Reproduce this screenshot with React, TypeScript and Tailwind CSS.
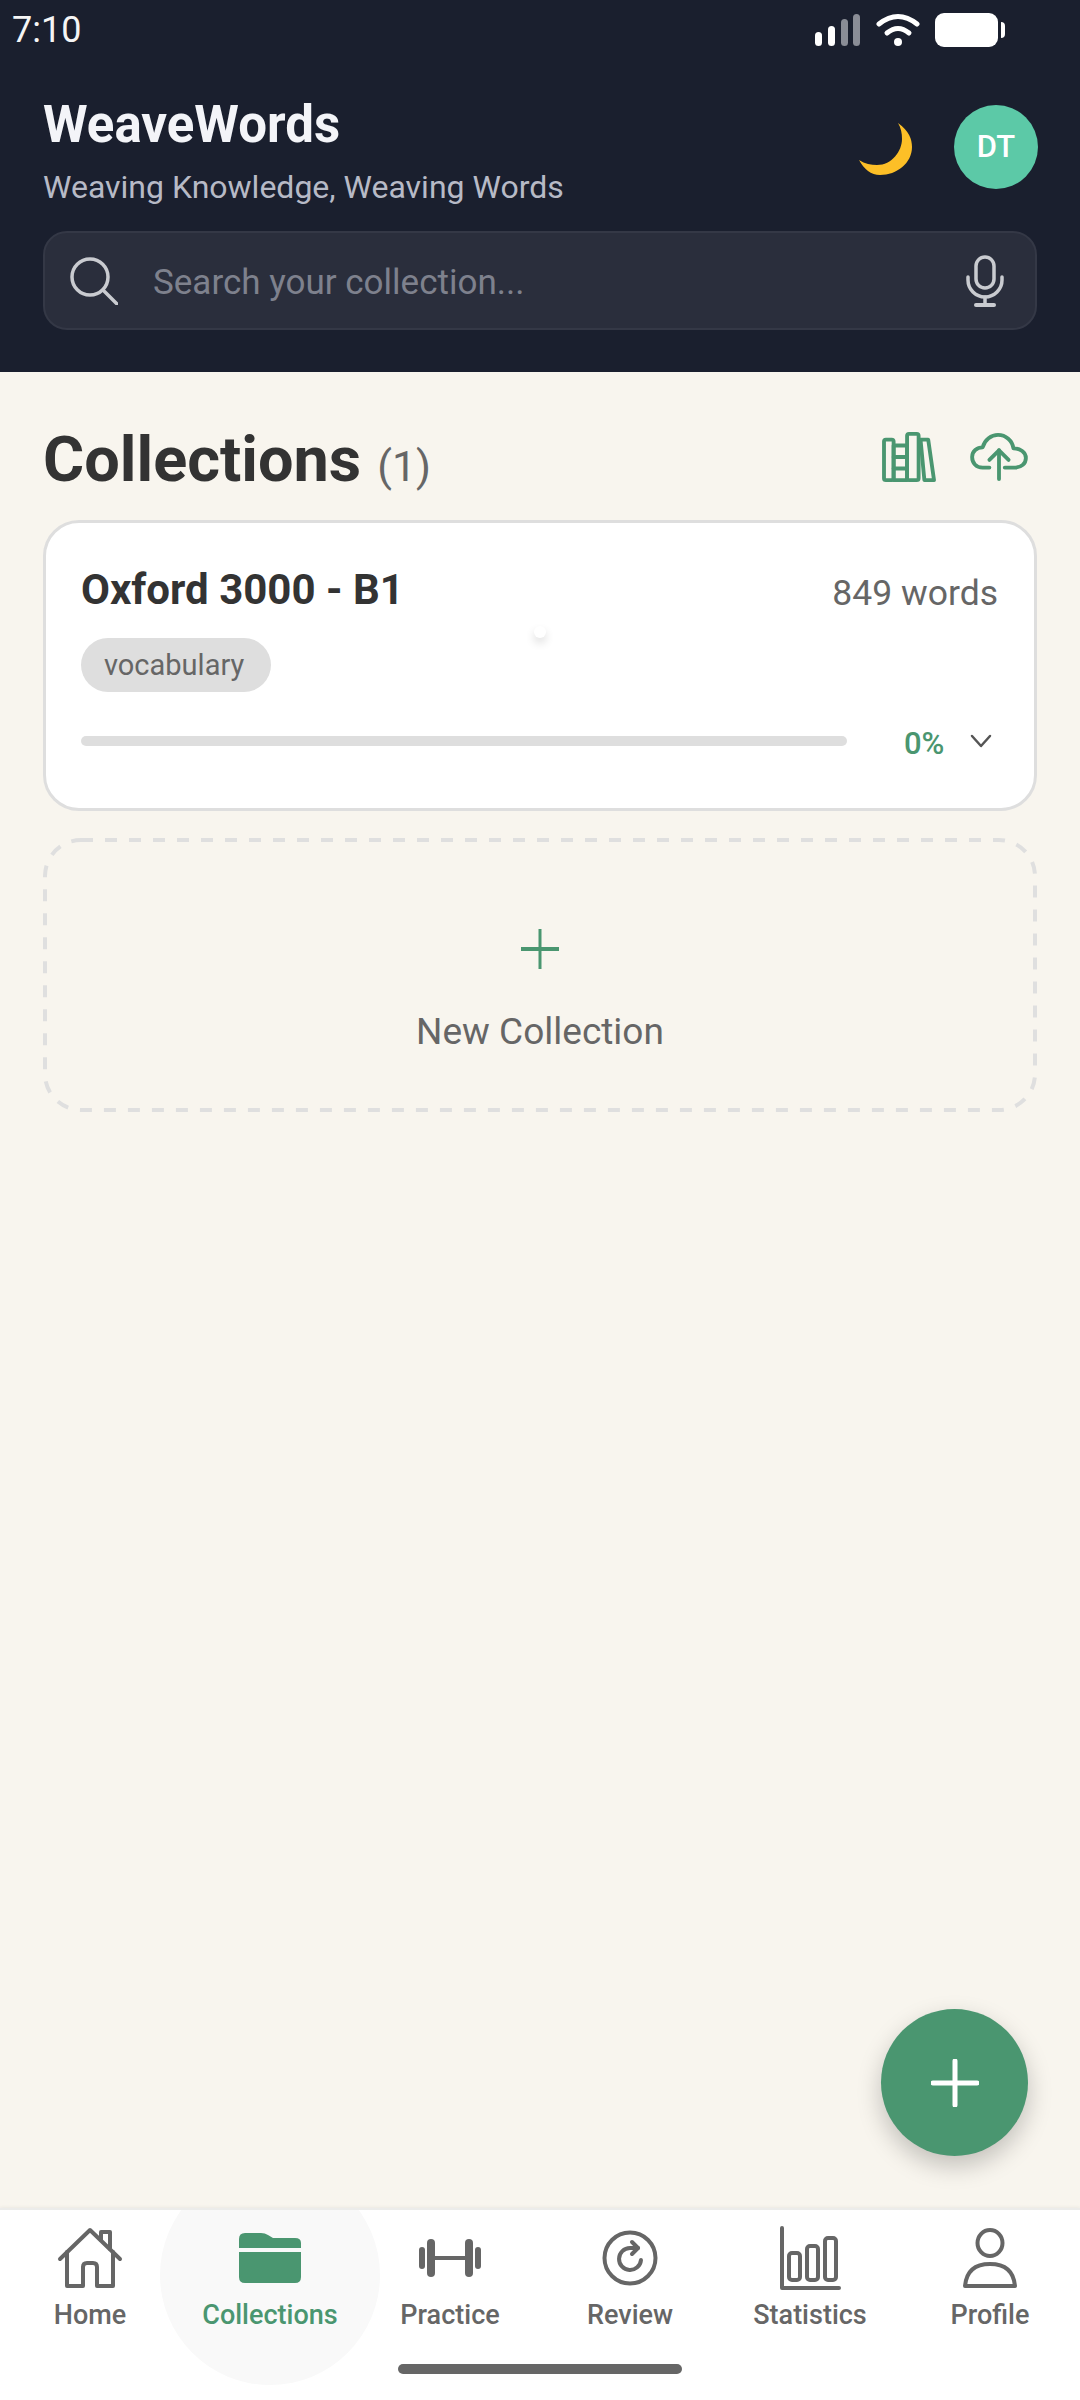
const navItems = ['Home', 'Collections', 'Practice', 'Review', 'Statistics', 'Profile']

function NavIcon({ name }: { name: string }) {
  if (name === 'Home') return (
    <svg width="66" height="62" viewBox="0 0 66 62" fill="none" stroke="#666" strokeWidth="4" strokeLinecap="round" strokeLinejoin="round">
      <path d="M3 32 33 3l30 29" />
      <path d="M10 25v34h16V40q0-4 4-4h6q4 0 4 4v19h16V25" />
      <path d="M44 13V5h9v17" />
    </svg>
  )
  if (name === 'Collections') return (
    <svg width="62" height="52" viewBox="0 0 62 52" fill="#4a9670">
      <path d="M0 16V7q0-6 6-6h16q4 0 7 2l5 3h22q6 0 6 5v5z" />
      <path d="M0 20h62v25q0 6-6 6H6q-6 0-6-6z" />
    </svg>
  )
  if (name === 'Practice') return (
    <svg width="62" height="38" viewBox="0 0 62 38" fill="#666">
      <rect x="0" y="8" width="6" height="22" rx="3" />
      <rect x="8" y="0" width="8" height="38" rx="4" />
      <rect x="15" y="17" width="32" height="4" />
      <rect x="46" y="0" width="8" height="38" rx="4" />
      <rect x="56" y="8" width="6" height="22" rx="3" />
    </svg>
  )
  if (name === 'Review') return (
    <svg width="56" height="56" viewBox="0 0 56 56" fill="none" stroke="#666" strokeWidth="4" strokeLinecap="round" strokeLinejoin="round">
      <circle cx="28" cy="28" r="25.5" />
      <path d="M39 30a11 11 0 1 1-11-12h8" />
      <path d="M30 12l6 6-6 6" />
    </svg>
  )
  if (name === 'Statistics') return (
    <svg width="62" height="64" viewBox="0 0 62 64" fill="none" stroke="#666" strokeWidth="4" strokeLinecap="round" strokeLinejoin="round">
      <path d="M3 2v60h57" />
      <rect x="10" y="27" width="11" height="27" rx="3" />
      <rect x="28" y="20" width="11" height="34" rx="3" />
      <rect x="46" y="12" width="11" height="42" rx="3" />
    </svg>
  )
  return (
    <svg width="54" height="60" viewBox="0 0 54 60" fill="none" stroke="#666" strokeWidth="4" strokeLinecap="round" strokeLinejoin="round">
      <ellipse cx="27" cy="15" rx="12.5" ry="13" />
      <path d="M2 58q2-22 25-22t25 22z" />
    </svg>
  )
}

export default function App() {
  return (
    <div className="relative w-[1080px] h-[2400px] flex flex-col overflow-hidden bg-[#f8f5ee] font-['Roboto',sans-serif]">
      {/* Header */}
      <header className="h-[372px] shrink-0 bg-[#1a1f2e]">
        <div className="flex items-center justify-between h-[60px] pl-3 pr-[75px]">
          <span className="text-[36px] leading-none text-[#f5f5f5]">7:10</span>
          <div className="flex items-center gap-[15px]">
            <svg width="46" height="34" viewBox="0 0 46 34">
              <rect x="0" y="19" width="7" height="14" rx="3.5" fill="#fff" />
              <rect x="13" y="13" width="7" height="20" rx="3.5" fill="#fff" />
              <rect x="26" y="6" width="7" height="27" rx="3.5" fill="#8a8d96" />
              <rect x="38" y="1" width="7" height="32" rx="3.5" fill="#8a8d96" />
            </svg>
            <svg width="44" height="34" viewBox="0 0 44 34" fill="none" stroke="#fff" strokeWidth="5" strokeLinecap="round">
              <path d="M3 11q19-15 38 0" />
              <path d="M11 20q11-9 22 0" />
              <circle cx="22" cy="29" r="4" fill="#fff" stroke="none" />
            </svg>
            <div className="flex items-center gap-[3px]">
              <div className="w-[63px] h-[34px] rounded-[9px] bg-white" />
              <div className="w-1 h-4 rounded-r-sm bg-white" />
            </div>
          </div>
        </div>
        <div className="flex items-start justify-between pl-[43px] pr-[42px] mt-[37px]">
          <div>
            <h1 className="text-[51px] leading-[56px] font-bold text-[#f3f4f8]">WeaveWords</h1>
            <p className="text-[32px] leading-[36px] mt-[16px] text-[#b7bac6]">Weaving Knowledge, Weaving Words</p>
          </div>
          <div className="flex items-start gap-[42px] mt-[8px]">
            <svg className="mt-[18px]" width="53" height="52" viewBox="0 0 53 52">
              <path d="M39 0C50 8 53 16 53 24 53 40 38 52 21 52 12 52 5 46 0 37 6 41 12 42 18 42 33 42 43 28 43 16 43 10 42 5 39 0z" fill="#fdbf27" />
            </svg>
            <div className="w-[84px] h-[84px] rounded-full bg-[#5cc9a7] flex items-center justify-center text-[31px] font-medium text-white">DT</div>
          </div>
        </div>
        <div className="mx-[43px] mt-[26px] h-[99px] rounded-[24px] bg-[#2a2e3c] border-2 border-[#343846] flex items-center pl-[25px] pr-[31px]">
          <svg width="48" height="48" viewBox="0 0 48 48" fill="none" stroke="#c9cbd0" strokeWidth="3.5" strokeLinecap="round">
            <circle cx="20" cy="20" r="18" />
            <path d="M33 33l14 14" />
          </svg>
          <span className="ml-[35px] mt-[6px] flex-1 text-[35px] text-[#7e818d]">Search your collection...</span>
          <svg width="38" height="52" viewBox="0 0 38 52" fill="none" stroke="#c9cbd0" strokeWidth="3.5" strokeLinecap="round">
            <rect x="10" y="2" width="18" height="31" rx="9" />
            <path d="M2 22v3a17 17 0 0 0 34 0v-3" />
            <path d="M19 42v6" />
            <path d="M10 50h18" strokeWidth="4" />
          </svg>
        </div>
      </header>

      {/* Content */}
      <main className="flex-1 px-[43px] pt-[53px]">
        <div className="flex items-center justify-between h-[72px]">
          <div className="flex items-baseline gap-[16px]">
            <h2 className="text-[63px] leading-[72px] font-bold text-[#333]">Collections</h2>
            <span className="text-[43px] text-[#666]">(1)</span>
          </div>
          <div className="flex items-center gap-[34px] pr-[9px] -mt-[8px]">
            <svg width="54" height="50" viewBox="0 0 56 52" fill="none" stroke="#4a9670" strokeWidth="4" strokeLinecap="round" strokeLinejoin="round">
              <rect x="2" y="8" width="10" height="42" rx="2" />
              <rect x="12" y="14" width="14" height="36" />
              <rect x="26" y="2" width="12" height="48" rx="2" />
              <path d="M12 26h14M12 38h14" />
              <path d="M40 8h8l6 42h-10z" />
            </svg>
            <svg width="58" height="48" viewBox="0 0 60 50" fill="none" stroke="#4a9670" strokeWidth="4" strokeLinecap="round" strokeLinejoin="round">
              <path d="M20 36H13C6 36 2 31 2 25c0-6 5-10 11-10C15 7 22 2 29 2c8 0 15 6 16 14 7 0 13 4 13 10 0 6-5 10-11 10H36" />
              <path d="M30 48V18" />
              <path d="M20 28l10-10 10 10" />
            </svg>
          </div>
        </div>

        <section className="relative mt-[23px] h-[291px] rounded-[36px] border-[3px] border-[#dedede] bg-white pl-[35px] pr-[36px] pt-[36px]">
          <div className="flex items-center justify-between">
            <h3 className="text-[42px] leading-[48px] font-bold text-[#333]">Oxford 3000 - B1</h3>
            <span className="mt-[8px] text-[35.5px] text-[#666]">849 words</span>
          </div>
          <div className="mt-[18px] inline-flex h-[54px] items-center rounded-full bg-[#dedede] pl-[23px] pr-[27px] text-[29px] text-[#666]">vocabulary</div>
          <div className="mt-[22px] flex items-center">
            <div className="w-[766px] h-[10px] rounded-[5px] bg-[#dedede]" />
            <span className="ml-[57px] mt-[7px] text-[31px] font-medium text-[#4a9670]">0%</span>
            <svg className="ml-[26px]" width="22" height="14" viewBox="0 0 22 14" fill="none" stroke="#555" strokeWidth="2.5" strokeLinecap="round" strokeLinejoin="round">
              <path d="M2 2l9 10 9-10" />
            </svg>
          </div>
          {/* touch ripple dot */}
          <div className="absolute left-[488px] top-[103px] w-3 h-3 rounded-full bg-white shadow-[0_5px_10px_rgba(0,0,0,0.14)]" />
        </section>

        <button className="relative mt-[27px] w-full h-[274px] flex flex-col items-center">
          <svg className="absolute inset-0" width="994" height="274" viewBox="0 0 994 274" fill="none">
            <rect x="2" y="2" width="990" height="270" rx="36" stroke="#dfdfdf" strokeWidth="4" strokeDasharray="12 12" />
          </svg>
          <svg className="mt-[91px]" width="40" height="40" viewBox="0 0 40 40" fill="none" stroke="#4a9670">
            <path d="M20 0v40" strokeWidth="3" />
            <path d="M1 20h38" strokeWidth="4" />
          </svg>
          <span className="mt-[41px] text-[37px] leading-[44px] text-[#666]">New Collection</span>
        </button>
      </main>

      {/* FAB */}
      <button className="absolute left-[881px] top-[2009px] w-[147px] h-[147px] rounded-full bg-[#4a9670] shadow-[0_10px_24px_rgba(0,0,0,0.22)] flex items-center justify-center">
        <svg width="48" height="48" viewBox="0 0 48 48" fill="none" stroke="#fff" strokeWidth="5" strokeLinecap="round">
          <path d="M24 2v44M2 24h44" />
        </svg>
      </button>

      {/* Bottom nav */}
      <nav className="relative h-[192px] shrink-0 overflow-hidden bg-white border-t-2 border-[#ececea] shadow-[0_-1px_3px_rgba(0,0,0,0.05)]">
        <div className="absolute left-[160px] top-[-45px] w-[220px] h-[220px] rounded-full bg-[#f9f9f9]" />
        <div className="relative grid grid-cols-6">
          {navItems.map(name => (
            <div key={name} className="flex flex-col items-center">
              <div className="mt-[9px] h-[78px] flex items-center justify-center">
                <NavIcon name={name} />
              </div>
              <span className={`text-[27px] leading-[36px] font-medium ${name === 'Collections' ? 'text-[#4a9670]' : 'text-[#666]'}`}>{name}</span>
            </div>
          ))}
        </div>
        <div className="absolute left-[398px] top-[154px] w-[284px] h-[10px] rounded-[5px] bg-[#666]" />
      </nav>
    </div>
  )
}
